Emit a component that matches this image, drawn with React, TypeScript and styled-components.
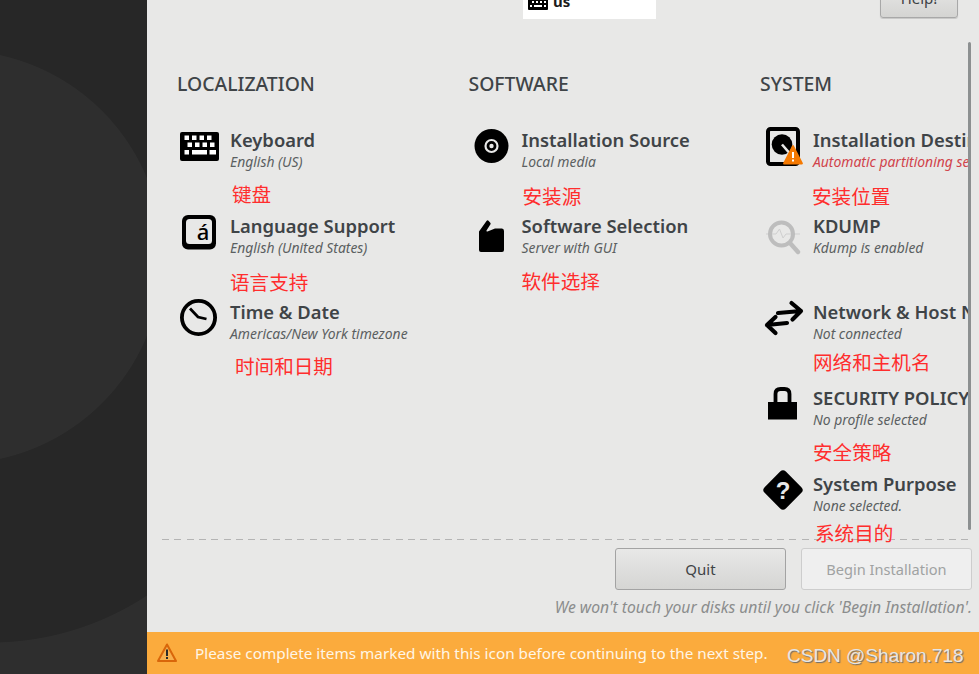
import React from 'react';
import styled, { createGlobalStyle } from 'styled-components';

const GlobalStyle = createGlobalStyle`
  html, body {
    margin: 0;
    height: 100%;
    background: #272727;
  }
  * {
    box-sizing: border-box;
  }
`;

const SANS = `'Noto Sans', 'Open Sans', sans-serif`;
const CJK = `'Noto Sans CJK SC', sans-serif`;

const Page = styled.div`
  display: flex;
  width: 979px;
  height: 674px;
  overflow: hidden;
  position: relative;
  font-family: ${SANS};
`;

// dark sidebar with the big soft circles of the anaconda theme
const Sidebar = styled.aside`
  width: 147px;
  flex: none;
  background-color: #272727;
  background-image:
    radial-gradient(circle 207px at -44px 257px, #2e2e2e 99.6%, transparent 100%),
    radial-gradient(circle 286px at -10px -143px, transparent 99.7%, #2e2e2e 100%);
  background-size: 100% 100%, 100% 174px;
  background-position: 0 0, 0 100%;
  background-repeat: no-repeat;
`;

const Main = styled.main`
  flex: 1;
  min-width: 0;
  display: flex;
  flex-direction: column;
  background: #e8e8e7;
`;

const TopBar = styled.div`
  height: 19px;
  flex: none;
  display: flex;
  align-items: flex-end;
  overflow: hidden;
  padding-left: 376px;
`;

const KeyboardBox = styled.div`
  width: 133px;
  height: 30px;
  background: #fff;
  display: flex;
  align-items: flex-end;
  gap: 5px;
  padding: 0 0 9px 5px;
  font-size: 15px;
  font-weight: 700;
  line-height: 18px;
  color: #1c1c1c;
`;

const HelpButton = styled.button`
  width: 78px;
  height: 31px;
  margin: 0 0 1px 224px;
  padding: 0 0 9px;
  border: 1px solid #a8a8a8;
  border-radius: 3px;
  background: linear-gradient(#e6e6e5, #d4d4d2);
  box-shadow: 0 1px 1px rgba(0, 0, 0, 0.15);
  font: 15px ${SANS};
  color: #3c4144;
`;

const Hub = styled.div`
  position: relative;
  flex: none;
  height: 520px;
  width: 824px;
  padding: 53px 0 0 30px;
  overflow-x: clip;
  overflow-y: visible;
  display: grid;
  grid-template-columns: 291.5px 291.5px 291.5px;
`;

const ScrollThumb = styled.div`
  position: absolute;
  top: 23px;
  right: 0;
  width: 3px;
  height: 488px;
  border-radius: 2px;
  background: #8c9091;
`;

const Column = styled.section`
  display: flex;
  flex-direction: column;
  white-space: nowrap;
`;

const ColumnTitle = styled.h2`
  margin: 0 0 32px;
  font-size: 19.4px;
  font-weight: 500;
  line-height: 24px;
  color: #3f4447;
`;

const Spoke = styled.div`
  height: 86px;
  display: flex;
`;

const IconCell = styled.div`
  width: 53px;
  flex: none;
`;

const IconSvg = styled.svg`
  display: block;
  width: 46px;
  height: 46px;
  margin-top: -5px;
`;

const SpokeText = styled.div`
  display: flex;
  flex-direction: column;
`;

const SpokeTitle = styled.div`
  font-size: 18.4px;
  font-weight: 600;
  line-height: 24px;
  color: #3f4447;
`;

const SpokeStatus = styled.div<{ $warn?: boolean }>`
  font-size: 13.9px;
  font-style: italic;
  line-height: 20px;
  color: ${p => (p.$warn ? '#d1434b' : '#5b5f61')};
`;

const Note = styled.div<{ $x: number; $y: number }>`
  margin: ${p => p.$y}px 0 0 ${p => p.$x}px;
  font-family: ${CJK};
  font-size: 19.6px;
  line-height: 24px;
  color: #ff2d2d;
`;

const Footer = styled.div`
  flex: none;
  padding: 0 7px 0 15px;
  display: flex;
  flex-direction: column;
  align-items: flex-end;
`;

const DashedRule = styled.div`
  width: 100%;
  height: 1px;
  background: repeating-linear-gradient(90deg, #b4b4b4 0 7px, transparent 7px 12.3px);
`;

const ButtonRow = styled.div`
  display: flex;
  gap: 15px;
  margin-top: 8px;
`;

const ActionButton = styled.button<{ $disabled?: boolean }>`
  width: 171px;
  height: 42px;
  padding: 0;
  border-radius: 3px;
  font: ${p => (p.$disabled ? '14.6px' : '15px')} ${SANS};
  border: 1px solid ${p => (p.$disabled ? '#cdcdcd' : '#a3a3a3')};
  background: ${p => (p.$disabled ? '#efefef' : 'linear-gradient(#e8e8e7, #d5d5d3)')};
  color: ${p => (p.$disabled ? '#a0a2a2' : '#3f4447')};
`;

const DiskNote = styled.div`
  margin-top: 7px;
  font-size: 15.7px;
  font-style: italic;
  line-height: 20px;
  color: #8b8d8d;
  white-space: nowrap;
`;

const WarningBar = styled.div`
  margin-top: auto;
  height: 42px;
  flex: none;
  display: flex;
  align-items: center;
  padding-left: 10px;
  background: #fbab3d;
  font-size: 15.3px;
  color: #fff6e6;
  white-space: nowrap;
`;

const WarningIcon = styled.svg`
  width: 20px;
  height: 20px;
  margin-right: 18px;
  flex: none;
`;

const Watermark = styled.div`
  position: absolute;
  left: 787px;
  top: 644px;
  font-family: 'Liberation Sans', sans-serif;
  font-size: 19px;
  line-height: 24px;
  color: #e6e6e6;
  text-shadow: 1px 1px 1px #6b6b6b;
  white-space: nowrap;
`;

const KeyboardGlyph = () => (
  <>
    <rect x="3" y="9" width="39" height="29" rx="2" fill="#000" />
    {[5, 12.5, 20, 27.5].map(x => (
      <rect key={x} x={x + 2.5} y="12.5" width="4.5" height="4.5" fill="#fff" />
    ))}
    {[10.5, 18, 25.5, 33].map(x => (
      <rect key={x} x={x} y="19.5" width="4.5" height="4.5" fill="#fff" />
    ))}
    <rect x="7.5" y="27" width="4.5" height="4.5" fill="#fff" />
    <rect x="15" y="27" width="15" height="4.5" fill="#fff" />
    <rect x="32.5" y="27" width="6.5" height="4.5" fill="#fff" />
  </>
);

const icons: Record<string, React.ReactNode> = {
  keyboard: <KeyboardGlyph />,
  language: (
    <>
      <rect x="5" y="6" width="34" height="34.5" rx="6" fill="#000" />
      <rect x="9" y="10" width="26" height="25" rx="3.5" fill="#e8e8e7" />
      <text x="26" y="31" textAnchor="middle" fontFamily="'Noto Sans', sans-serif" fontWeight="500" fontSize="22" fill="#000">á</text>
    </>
  ),
  clock: (
    <>
      <circle cx="21.5" cy="22.5" r="16.6" fill="none" stroke="#000" strokeWidth="3.8" />
      <path d="M13 13.5 L21 22 L29.5 24" fill="none" stroke="#000" strokeWidth="2.8" />
    </>
  ),
  disc: (
    <>
      <circle cx="22.5" cy="23" r="17" fill="#000" />
      <circle cx="22.5" cy="23" r="6" fill="none" stroke="#e8e8e7" strokeWidth="2.2" />
      <circle cx="22.5" cy="23" r="2.2" fill="#e8e8e7" />
    </>
  ),
  package: (
    <path
      d="M10 22.5 L17.5 12 Q18.5 10.8 19.5 11.8 L21.5 14 Q22 15 21 16 L17.5 21.5 Q17 22.7 18.5 22.5 L26 19.5 L33 19.6 Q35 20 35 22 V41 Q35 43 33 43 H12 Q10 43 10 41 Z"
      fill="#000"
    />
  ),
  disk: (
    <>
      <rect x="8" y="6" width="30" height="35" rx="2.5" fill="#e8e8e7" stroke="#000" strokeWidth="4" />
      <circle cx="22" cy="21.5" r="10.3" fill="#000" />
      <path d="M22 21.5 L32 33" stroke="#e8e8e7" strokeWidth="2.6" />
      <path d="M33 23 L42 40.5 L24 40.5 Z" fill="#f57900" stroke="#f57900" strokeWidth="1.8" strokeLinejoin="round" />
      <rect x="32" y="29" width="2" height="6" fill="#fff" />
      <rect x="32" y="36.5" width="2" height="2" fill="#fff" />
    </>
  ),
  search: (
    <>
      <path d="M6 25 H16 L19.5 20 L23 29 L26 25 H40" fill="none" stroke="#cfcfcf" strokeWidth="1" />
      <circle cx="21.5" cy="25" r="11.5" fill="none" stroke="#bdbdbd" strokeWidth="4" />
      <path d="M30 34 L38 43" stroke="#bdbdbd" strokeWidth="4.4" strokeLinecap="round" />
    </>
  ),
  network: (
    <>
      <path d="M18 18 L41 16 M31.5 8 L41 16 L32.5 24.5" fill="none" stroke="#000" strokeWidth="4.2" strokeLinecap="round" strokeLinejoin="round" />
      <path d="M27 28 L7 30 M15.5 22 L7 30 L15.5 38" fill="none" stroke="#000" strokeWidth="4.2" strokeLinecap="round" strokeLinejoin="round" />
    </>
  ),
  lock: (
    <>
      <rect x="8" y="21" width="29" height="17.5" fill="#000" />
      <path d="M15.5 22 V13 Q15.5 8 20.5 8 H24.5 Q29.5 8 29.5 13 V22" fill="none" stroke="#000" strokeWidth="3.8" />
    </>
  ),
  question: (
    <>
      <rect x="8" y="8" width="30" height="30" rx="4" transform="rotate(45 23 23)" fill="#000" />
      <text x="23" y="31.5" textAnchor="middle" fontFamily="'Liberation Sans', sans-serif" fontWeight="700" fontSize="24" fill="#e8e8e7">?</text>
    </>
  ),
};

interface SpokeItem {
  icon: string;
  title: string;
  status: string;
  note?: string;
  noteX?: number;
  noteY?: number;
  warn?: boolean;
}

const columns: { title: string; spokes: SpokeItem[] }[] = [
  {
    title: 'LOCALIZATION',
    spokes: [
      { icon: 'keyboard', title: 'Keyboard', status: 'English (US)', note: '键盘', noteX: 2, noteY: 10 },
      { icon: 'language', title: 'Language Support', status: 'English (United States)', note: '语言支持', noteX: 0, noteY: 12 },
      { icon: 'clock', title: 'Time & Date', status: 'Americas/New York timezone', note: '时间和日期', noteX: 5, noteY: 10 },
    ],
  },
  {
    title: 'SOFTWARE',
    spokes: [
      { icon: 'disc', title: 'Installation Source', status: 'Local media', note: '安装源', noteX: 1, noteY: 12 },
      { icon: 'package', title: 'Software Selection', status: 'Server with GUI', note: '软件选择', noteX: 0, noteY: 11 },
    ],
  },
  {
    title: 'SYSTEM',
    spokes: [
      { icon: 'disk', title: 'Installation Destination', status: 'Automatic partitioning selected', note: '安装位置', noteX: -1, noteY: 12, warn: true },
      { icon: 'search', title: 'KDUMP', status: 'Kdump is enabled' },
      { icon: 'network', title: 'Network & Host Name', status: 'Not connected', note: '网络和主机名', noteX: 0, noteY: 6 },
      { icon: 'lock', title: 'SECURITY POLICY', status: 'No profile selected', note: '安全策略', noteX: 0, noteY: 10 },
      { icon: 'question', title: 'System Purpose', status: 'None selected.', note: '系统目的', noteX: 2, noteY: 5 },
    ],
  },
];

export default function App() {
  return (
    <>
      <GlobalStyle />
      <Page>
        <Sidebar />
        <Main>
          <TopBar>
            <KeyboardBox>
              <svg width="20" height="15" viewBox="0 0 20 15">
                <rect width="20" height="15" rx="1" fill="#000" />
                <path d="M2 2h2v2H2zM6 2h2v2H6zM10 2h2v2h-2zM14 2h2v2h-2zM4 6h2v2H4zM8 6h2v2H8zM12 6h2v2h-2zM16 6h2v2h-2zM2 10h2v2H2zM6 10h8v2H6zM16 10h2v2h-2z" fill="#fff" />
              </svg>
              us
            </KeyboardBox>
            <HelpButton>Help!</HelpButton>
          </TopBar>
          <Hub>
            {columns.map(col => (
              <Column key={col.title}>
                <ColumnTitle>{col.title}</ColumnTitle>
                {col.spokes.map(s => (
                  <Spoke key={s.title}>
                    <IconCell>
                      <IconSvg viewBox="0 0 46 46">{icons[s.icon]}</IconSvg>
                    </IconCell>
                    <SpokeText>
                      <SpokeTitle>{s.title}</SpokeTitle>
                      <SpokeStatus $warn={s.warn}>{s.status}</SpokeStatus>
                      {s.note && (
                        <Note $x={s.noteX ?? 0} $y={s.noteY ?? 0}>
                          {s.note}
                        </Note>
                      )}
                    </SpokeText>
                  </Spoke>
                ))}
              </Column>
            ))}
            <ScrollThumb />
          </Hub>
          <Footer>
            <DashedRule />
            <ButtonRow>
              <ActionButton>Quit</ActionButton>
              <ActionButton $disabled>Begin Installation</ActionButton>
            </ButtonRow>
            <DiskNote>We won't touch your disks until you click 'Begin Installation'.</DiskNote>
          </Footer>
          <WarningBar>
            <WarningIcon viewBox="0 0 20 20">
              <path d="M10 1.5 L19 18 H1 Z" fill="#f7b04f" stroke="#d9660a" strokeWidth="2" strokeLinejoin="round" />
              <rect x="9" y="6.5" width="2" height="6.5" fill="#2a2a2a" />
              <rect x="9" y="14" width="2" height="2" fill="#2a2a2a" />
            </WarningIcon>
            Please complete items marked with this icon before continuing to the next step.
          </WarningBar>
        </Main>
        <Watermark>CSDN @Sharon.718</Watermark>
      </Page>
    </>
  );
}
